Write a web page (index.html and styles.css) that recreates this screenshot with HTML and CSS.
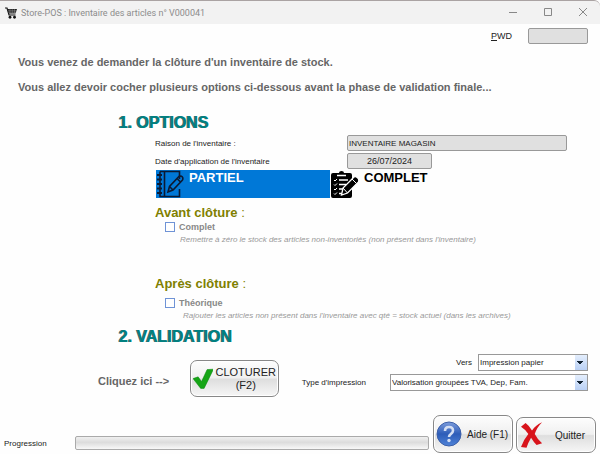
FILE: index.html
```html
<!DOCTYPE html>
<html lang="fr">
	<head>
		<meta charset="utf-8">
		<title>Store-POS : Inventaire des articles n° V000041</title>
		<link rel="stylesheet" href="styles.css">
	</head>
	<body>
		<header class="titlebar">
			<svg class="cart" viewBox="0 0 24 24" width="12" height="12">
				<path d="M0 2h4l4 14h13" fill="none" stroke="#111" stroke-width="2.4"/>
				<path d="M4.500 4H24l-3 9H7z" fill="#222"/>
				<path d="M6 7.500h17M7 10.500h15M10 4v9M14.500 4v9M19 4v9" stroke="#aaa" stroke-width="0.800"/>
				<circle cx="10" cy="20.500" r="2.800" fill="#111"/>
				<circle cx="19" cy="20.500" r="2.800" fill="#111"/>
			</svg>
			<h1 class="title">Store-POS : Inventaire des articles n° V000041</h1>
			<div class="winBtns">
				<button type="button" aria-label="Réduire"><svg viewBox="0 0 8 8" width="8" height="8"><path d="M0 4.500h8"/></svg></button>
				<button type="button" aria-label="Agrandir"><svg viewBox="0 0 8 8" width="8" height="8"><path d="M.5.5h7v7h-7z"/></svg></button>
				<button type="button" aria-label="Fermer"><svg viewBox="0 0 8 8" width="8" height="8"><path d="M0 0l8 8M8 0L0 8"/></svg></button>
			</div>
		</header>
		<main>
			<div class="pwdRow">
				<label for="pwd"><u>P</u>WD</label>
				<input class="field" id="pwd" type="password">
			</div>
			<p class="intro">Vous venez de demander la clôture d'un inventaire de stock.</p>
			<p class="intro">Vous allez devoir cocher plusieurs options ci-dessous avant la phase de validation finale...</p>

			<section class="options">
				<h2>1. OPTIONS</h2>
				<div class="formRow">
					<label for="raison">Raison de l'inventaire :</label>
					<input class="field" id="raison" type="text" value="INVENTAIRE MAGASIN" readonly>
				</div>
				<div class="formRow">
					<label for="dateInv">Date d'application de l'inventaire</label>
					<input class="field dateField" id="dateInv" type="text" value="26/07/2024" readonly>
				</div>
				<div class="modes">
					<button type="button" class="mode active">
						<svg viewBox="0 0 28 28" width="28" height="28" fill="none" stroke="#0b1a33" stroke-width="1.600">
							<path d="M4 1.500h19.500V9M23.500 19v7.500H4V1.500M8.500 2v24"/>
							<path d="M1 5h5M1 9.500h5M1 14h5M1 18.500h5M1 23h5" stroke-width="2"/>
							<path d="M12 22l1.500-5.500L23 6.500q2-1 3.200.3T26.500 10L17 20zM13.500 16.500L17 20M21 8.500l3.500 3.500"/>
						</svg>
						<span>PARTIEL</span>
					</button>
					<button type="button" class="mode">
						<svg viewBox="0 0 28 28" width="28" height="28">
							<path d="M2 3h6q0-2 2.500-2T13 3h6q2 0 2 2v21q0 2-2 2H2q-2 0-2-2V5q0-2 2-2z" fill="#000"/>
							<path d="M6 5.500h9M8 10h9M8 14.500h7M8 19h4M8 23.500h4" stroke="#fff" stroke-width="1.500"/>
							<path d="M3 10l1 1 2-2M3 14.500l1 1 2-2M3 19l1 1 2-2M3 23.500l1 1 2-2" stroke="#fff" fill="none"/>
							<path d="M10.500 25l1.500-7L23 7q1.500-1 3.500.8T27.500 12L16.500 23z" fill="#000" stroke="#fff" stroke-width="1.300"/>
							<path d="M12 18l4.500 5M21 9l4.500 4.500" stroke="#fff"/>
						</svg>
						<span>COMPLET</span>
					</button>
				</div>
				<div class="phase">
					<h3>Avant clôture <span>:</span></h3>
					<label class="check"><input type="checkbox">Complet</label>
					<p class="hint">Remettre à zéro le stock des articles non-inventoriés (non présent dans l'inventaire)</p>
				</div>
				<div class="phase after">
					<h3>Après clôture <span>:</span></h3>
					<label class="check"><input type="checkbox">Théorique</label>
					<p class="hint">Rajouter les articles non présent dans l'inventaire avec qté = stock actuel (dans les archives)</p>
				</div>
				<h2>2. VALIDATION</h2>
			</section>

			<section class="validation">
				<span class="clickHere">Cliquez ici --&gt;</span>
				<button type="button" class="btn closeBtn">
					<svg viewBox="0 0 24 24" width="24" height="24">
						<path d="M0 11.500l6-2 4 5.500L16.500 1l7.500-.5L13 23H9z" fill="#16a516" stroke="#0b8a12" stroke-width="0.600"/>
					</svg>
					<span>CLOTURER<br>(F2)</span>
				</button>
				<div class="print">
					<div class="printRow vers">
						<label for="vers">Vers</label>
						<select id="vers"><option>Impression papier</option></select>
					</div>
					<div class="printRow">
						<label for="typeImp">Type d'impression</label>
						<select id="typeImp"><option>Valorisation groupées TVA, Dep, Fam.</option></select>
					</div>
				</div>
			</section>
		</main>
		<footer>
			<label for="prog">Progression</label>
			<progress id="prog" value="0" max="100"></progress>
			<button type="button" class="btn helpBtn">
				<svg viewBox="0 0 26 26" width="26" height="26">
					<defs>
						<linearGradient id="blue" x1="0" y1="0" x2="0" y2="1">
							<stop offset="0" stop-color="#7d9ddd"/>
							<stop offset=".5" stop-color="#2d5cb8"/>
							<stop offset="1" stop-color="#4f83d8"/>
						</linearGradient>
					</defs>
					<circle cx="13" cy="13" r="12" fill="url(#blue)" stroke="#3c5fa8"/>
					<path d="M9 10q0-4 4-4t4 3.500q0 2-2 3.300T13 16" fill="none" stroke="#d5dff3" stroke-width="2.600"/>
					<circle cx="13" cy="19.500" r="1.700" fill="#d5dff3"/>
				</svg>
				<span>Aide (F1)</span>
			</button>
			<button type="button" class="btn quitBtn">
				<svg viewBox="0 0 24 28" width="22" height="26">
					<path d="M0 5l5-4q4 3 7 8Q16 3 23 0q-6 6-8 13 3 6 8 10l-6 2q-3-3-6-8-3 5-5 11l-6-1q3-8 8-14Q5 8 0 5z" fill="#d8141c"/>
				</svg>
				<span>Quitter</span>
			</button>
		</footer>
	</body>
</html>
```
FILE: styles.css
```css
*{
	box-sizing: border-box;
}
body{
	margin: 0;
	min-height: 100vh;
	display: flex;
	flex-direction: column;
	background-color: #fefefe;
	color: #222;
	font-family: "Liberation Sans", Arial, sans-serif;
	font-size: 8px;
}
h1, h2, h3, p{
	margin: 0;
}
button, input, select{
	font-family: inherit;
	font-size: inherit;
	color: inherit;
	margin: 0;
}
.titlebar{
	display: flex;
	align-items: center;
	height: 24px;
	padding-left: 5px;
	border-top: 1px solid #aaa3a3;
	border-radius: 0 6px 0 0;
	background-color: #f2f2f2;
}
.title{
	flex: 1;
	margin-left: 4px;
	font-family: Roboto, "Noto Sans", sans-serif;
	font-size: 9px;
	font-weight: normal;
	color: #8c8c8c;
}
.winBtns{
	display: flex;
}
.winBtns button{
	width: 35px;
	height: 22px;
	padding: 0;
	border: 0;
	background: none;
}
.winBtns svg{
	fill: none;
	stroke: #888;
}
.pwdRow{
	display: flex;
	justify-content: flex-end;
	align-items: center;
	gap: 16px;
	padding: 4px 12px 10px 0;
}
.pwdRow .field{
	width: 60px;
}
.pwdRow label{
	font-size: 9px;
}
.field{
	height: 16px;
	padding: 0 1px;
	border: 1px solid #999;
	border-radius: 2px;
	background-color: #e0e0e0;
}
.intro{
	margin: 0 0 9px 18px;
	font-size: 11px;
	font-weight: bold;
	line-height: 16px;
	color: #666;
}
.options{
	padding: 9px 12px 0 155px;
}
.options h2{
	margin-left: -36px;
	font-size: 16px;
	line-height: 20px;
	color: #008080;
	text-shadow: -1px 0 #3f5f5f;
}
.formRow{
	display: grid;
	grid-template-columns: 192px 1fr;
	align-items: center;
	margin: 2px 21px 0 0;
}
.dateField{
	width: 85px;
	text-align: center;
	font-size: 9px;
}
.modes{
	display: grid;
	grid-template-columns: 174px 1fr;
	margin: 1px 0 6px 1px;
}
.mode{
	display: flex;
	align-items: flex-start;
	gap: 5px;
	height: 28px;
	padding: 0;
	border: 0;
	background: none;
	font-size: 13px;
	font-weight: bold;
	color: #000;
}
.mode + .mode{
	padding-left: 1px;
}
.mode.active{
	background-color: #0078d7;
	color: #fff;
}
.phase h3{
	font-size: 13px;
	line-height: 17px;
	color: #808000;
}
.phase h3 span{
	font-weight: normal;
}
.check{
	display: flex;
	align-items: center;
	gap: 4px;
	height: 12px;
	margin-left: 10px;
	font-size: 9px;
	font-weight: bold;
	color: #888;
}
.check input{
	appearance: none;
	width: 10px;
	height: 10px;
	border: 1px solid #6f93d6;
	background-color: #fff;
}
.hint{
	margin: 1px 0 0 25px;
	font-style: italic;
	line-height: 12px;
	color: #999;
}
.after{
	margin: 29px 0 5px;
}
.after .check{
	margin-top: 5px;
}
.after .hint{
	margin-left: 28px;
}
.validation{
	display: flex;
	align-items: flex-start;
	padding: 7px 12px 0 98px;
}
.clickHere{
	width: 92px;
	font-size: 11px;
	font-weight: bold;
	line-height: 16px;
	margin-top: 19px;
	color: #666;
}
.btn{
	display: flex;
	align-items: center;
	border: 1px solid #888;
	border-radius: 7px;
	background: linear-gradient(#fdfdfd, #f0f0f0 48%, #dedede 52%, #f6f6f6);
	box-shadow: inset 0 0 0 1px #fff;
}
.closeBtn{
	width: 89px;
	height: 37px;
	margin-top: 6px;
	padding: 0 2px;
	gap: 2px;
	font-size: 11px;
	line-height: 13px;
}
.print{
	flex: 1;
	display: flex;
	flex-direction: column;
	align-items: flex-end;
	gap: 3px;
}
.printRow{
	display: flex;
	align-items: center;
	gap: 24px;
}
.printRow.vers{
	gap: 6px;
}
select{
	appearance: none;
	width: 198px;
	height: 17px;
	padding: 0 14px 0 1px;
	border: 1px solid #999;
	border-radius: 0;
	background:
		conic-gradient(from -45deg at 50% 100%, #123 90deg, transparent 0) right 4px center / 6px 3px no-repeat,
		linear-gradient(#e4eefc, #b9d0f5) right / 12px 100% no-repeat,
		#fff;
}
.vers select{
	width: 110px;
}
footer{
	display: flex;
	align-items: flex-end;
	margin-top: auto;
	padding: 0 4px 1px;
}
footer label{
	width: 71px;
	line-height: 18px;
}
progress{
	appearance: none;
	flex: 1;
	height: 14px;
	margin: 0 4px 3px 0;
	border: 1px solid #aaa;
	border-radius: 2px;
	background: linear-gradient(#f0f0f0, #dcdcdc 45%, #f8f8f8);
}
progress::-webkit-progress-bar{
	background: none;
}
.helpBtn, .quitBtn{
	width: 80px;
	height: 38px;
	padding: 0 2px;
	gap: 5px;
	font-size: 10px;
	white-space: nowrap;
}
.quitBtn{
	height: 36px;
	margin-left: 3px;
	gap: 12px;
	padding-left: 4px;
}
```
